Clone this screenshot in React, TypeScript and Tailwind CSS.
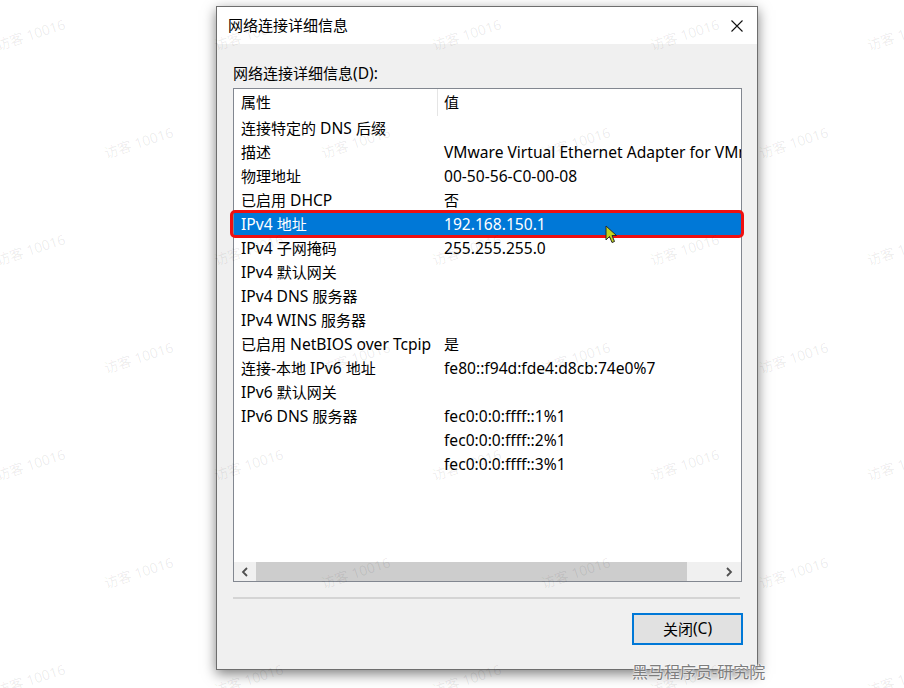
const FONT = "font-['Noto_Sans','Noto_Sans_CJK_SC',sans-serif]";

const ROWS: [string, string][] = [
  ["连接特定的 DNS 后缀", ""],
  ["描述", "VMware Virtual Ethernet Adapter for VMnet8"],
  ["物理地址", "00-50-56-C0-00-08"],
  ["已启用 DHCP", "否"],
  ["IPv4 地址", "192.168.150.1"],
  ["IPv4 子网掩码", "255.255.255.0"],
  ["IPv4 默认网关", ""],
  ["IPv4 DNS 服务器", ""],
  ["IPv4 WINS 服务器", ""],
  ["已启用 NetBIOS over Tcpip", "是"],
  ["连接-本地 IPv6 地址", "fe80::f94d:fde4:d8cb:74e0%7"],
  ["IPv6 默认网关", ""],
  ["IPv6 DNS 服务器", "fec0:0:0:ffff::1%1"],
  ["", "fec0:0:0:ffff::2%1"],
  ["", "fec0:0:0:ffff::3%1"],
];

const SELECTED = 4;

// latin runs render a touch wider, like Segoe UI next to YaHei
function T({ text }: { text: string }) {
  const parts = text.split(/([\u3000-\u9fff\uff00-\uffef]+)/).filter(Boolean);
  return (
    <>
      {parts.map((p, i) =>
        /[\u3000-\u9fff\uff00-\uffef]/.test(p) ? (
          <span key={i}>{p}</span>
        ) : (
          <span key={i} className="text-[15.6px]">
            {p}
          </span>
        )
      )}
    </>
  );
}

function watermarks() {
  const out: { x: number; y: number }[] = [];
  for (let r = 0; r < 7; r++) {
    const y = 35 + r * 107.5;
    const xs = r % 2 === 0 ? [-5, 213, 431, 649, 866] : [103, 320, 540, 758];
    xs.forEach((x) => out.push({ x, y }));
  }
  return out;
}

function Cursor() {
  return (
    <svg width="14" height="20" viewBox="0 0 14 20" className="absolute left-[371px] top-[13px]">
      <path
        d="M1 1 L1 15 L4.5 11.5 L7 17.5 L9.5 16.5 L7 10.5 L11.5 10.5 Z"
        fill="#c2d41c"
        stroke="#2a2a2a"
        strokeWidth="1"
        strokeLinejoin="round"
      />
    </svg>
  );
}

function ListRow({ name, value, selected }: { name: string; value: string; selected: boolean }) {
  return (
    <div className="relative">
      <div
        className={`flex h-[24px] overflow-hidden whitespace-nowrap leading-[24px] ${
          selected ? "bg-[#0078d7] text-white" : "text-black"
        }`}
      >
        <div className="w-[204px] shrink-0 pl-[7px]">
          <T text={name} />
        </div>
        <div className="pl-[6px]">
          <T text={value} />
        </div>
      </div>
      {selected && (
        <>
          <div className="pointer-events-none absolute -left-[4px] -right-[3px] -top-[2px] -bottom-[2px] rounded-[5px] border-[3px] border-[#f01010]" />
          <Cursor />
        </>
      )}
    </div>
  );
}

function Chevron({ dir }: { dir: "left" | "right" }) {
  return (
    <svg width="8" height="10" viewBox="0 0 8 10">
      <path
        d={dir === "left" ? "M6 1 L2 5 L6 9" : "M2 1 L6 5 L2 9"}
        fill="none"
        stroke="#505050"
        strokeWidth="1.8"
      />
    </svg>
  );
}

export default function App() {
  return (
    <div className={`relative h-[688px] w-[904px] overflow-hidden bg-white ${FONT} text-[15px]`}>
      <div className="pl-[216px] pt-[6px]">
        <div className="flex h-[664px] w-[542px] flex-col border border-[#6e6e6e] bg-[#f0f0f0] shadow-[0_4px_12px_rgba(0,0,0,0.5)]">
          {/* title bar */}
          <div className="flex h-[37px] shrink-0 items-center justify-between bg-white pl-[11px] pr-[14px]">
            <span className="text-black">网络连接详细信息</span>
            <svg width="12" height="12" viewBox="0 0 12 12">
              <path d="M0.5 0.5 L11.5 11.5 M11.5 0.5 L0.5 11.5" stroke="#111" strokeWidth="1.1" />
            </svg>
          </div>

          <div className="flex flex-1 flex-col pl-[16px] pr-[14px] pt-[19px]">
            <div className="h-[20px] leading-[20px] text-black">
              <T text="网络连接详细信息(D):" />
            </div>

            <div className="mt-[5px] mr-[1px] flex h-[494px] flex-col border border-[#828790] bg-white">
              <div className="flex h-[27px] shrink-0 items-stretch text-black">
                <div className="flex w-[204px] items-center border-r border-[#e5e5e5] pl-[7px]">属性</div>
                <div className="flex items-center pl-[6px]">值</div>
              </div>
              {ROWS.map(([n, v], i) => (
                <ListRow key={i} name={n} value={v} selected={i === SELECTED} />
              ))}
              <div className="flex-1" />
              <div className="flex h-[19px] shrink-0 items-stretch bg-[#f0f0f0]">
                <div className="flex w-[22px] items-center justify-center">
                  <Chevron dir="left" />
                </div>
                <div className="w-[431px] bg-[#cdcdcd]" />
                <div className="flex flex-1 items-center justify-end pr-[8px]">
                  <Chevron dir="right" />
                </div>
              </div>
            </div>

            <div className="mt-[15px] mr-[3px] h-[2px] bg-[#d4d4d4]" />

            <div className="mt-[14px] flex justify-end">
              <button className="flex h-[32px] w-[111px] items-center justify-center border-2 border-[#0078d7] bg-[#e1e1e1] text-black">
                <T text="关闭(C)" />
              </button>
            </div>
          </div>
        </div>
      </div>

      {/* watermarks */}
      <div className="pointer-events-none absolute inset-0">
        {watermarks().map((m, i) => (
          <span
            key={i}
            className="absolute -rotate-[18deg] whitespace-nowrap text-[14px] leading-[20px] text-black/[0.08]"
            style={{ left: m.x, top: m.y - 10 }}
          >
            访客 10016
          </span>
        ))}
        <span className="absolute left-[632px] top-[662px] whitespace-nowrap text-[16px] leading-[20px] text-[#7d7d7d] [text-shadow:0_0_2px_#fff,0_0_2px_#fff]">
          黑马程序员-研究院
        </span>
      </div>
    </div>
  );
}
